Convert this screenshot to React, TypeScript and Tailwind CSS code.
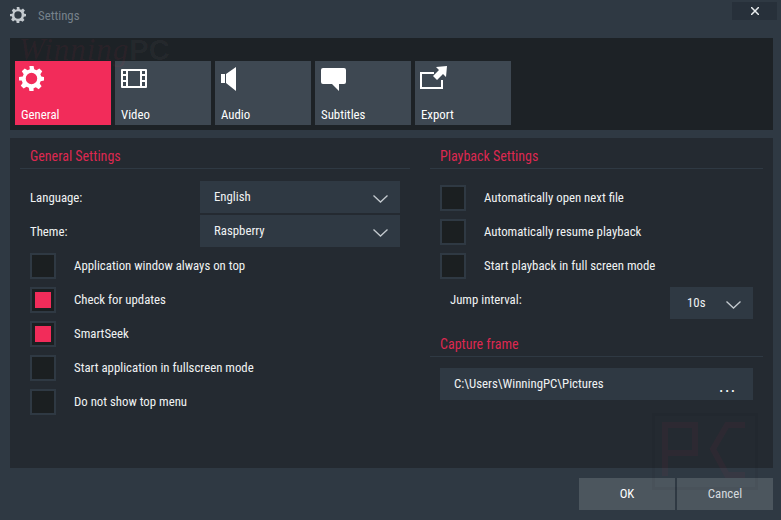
import React from 'react';

const GENERAL_OPTIONS = [
  { label: 'Application window always on top', checked: false },
  { label: 'Check for updates', checked: true },
  { label: 'SmartSeek', checked: true },
  { label: 'Start application in fullscreen mode', checked: false },
  { label: 'Do not show top menu', checked: false },
];

const PLAYBACK_OPTIONS = [
  'Automatically open next file',
  'Automatically resume playback',
  'Start playback in full screen mode',
];

function GearIcon({ className }: { className?: string }) {
  return (
    <svg viewBox="0 0 24 24" className={className} fill="currentColor">
      <path
        fillRule="evenodd"
        d="M10 0h4l.6 3.2 2.2.9L19.500 2.300l2.800 2.800-1.800 2.700.9 2.200L24 10.600v3.400l-3.200.6-.9 2.200 1.800 2.700-2.800 2.800-2.700-1.800-2.200.9L14 24h-4l-.6-3.200-2.200-.9-2.700 1.800-2.800-2.800 1.800-2.700-.9-2.200L0 14v-3.400l3.600-.6.900-2.200-1.800-2.700 2.800-2.800 2.700 1.800 2.200-.9zM12 6.500a5.500 5.500 0 1 0 0 11 5.500 5.500 0 0 0 0-11z"
      />
    </svg>
  );
}

function FilmIcon() {
  return (
    <svg viewBox="0 0 26 19" className="w-[26px] h-[19px] mt-[3px]" fill="currentColor">
      <path
        fillRule="evenodd"
        d="M1 0h24a1 1 0 0 1 1 1v17a1 1 0 0 1-1 1H1a1 1 0 0 1-1-1V1a1 1 0 0 1 1-1zM2 2v3h3V2zm0 5v4h3V7zm0 6v4h3v-4zM7 2v15h12V2zm14 0v3h3V2zm0 5v4h3V7zm0 6v4h3v-4z"
      />
    </svg>
  );
}

function SpeakerIcon() {
  return (
    <svg viewBox="0 0 16 24" className="w-[16px] h-[24px] mt-px" fill="currentColor">
      <path d="M0 7h4v9H0zM5 7l10-7v24L5 16z" />
    </svg>
  );
}

function BubbleIcon() {
  return (
    <svg viewBox="0 0 25 23" className="w-[25px] h-[23px] mt-[2px]" fill="currentColor">
      <path d="M2 0h21a2 2 0 0 1 2 2v12a2 2 0 0 1-2 2h-5v7l-7-7H2a2 2 0 0 1-2-2V2a2 2 0 0 1 2-2z" />
    </svg>
  );
}

function ExportIcon() {
  return (
    <svg viewBox="0 0 27 23" className="w-[27px] h-[23px] -ml-px" fill="none">
      <path d="M14 7H1v15h21v-8" stroke="currentColor" strokeWidth="2" />
      <path d="M27 0l-1 11-3-3-6 6-4-4 6-6-3-3z" fill="currentColor" />
    </svg>
  );
}

const TABS = [
  { label: 'General', icon: <GearIcon className="w-[25px] h-[25px] -ml-[2px]" />, active: true },
  { label: 'Video', icon: <FilmIcon /> },
  { label: 'Audio', icon: <SpeakerIcon /> },
  { label: 'Subtitles', icon: <BubbleIcon /> },
  { label: 'Export', icon: <ExportIcon /> },
];

function Checkbox({ checked }: { checked?: boolean }) {
  return (
    <div className="w-[26px] h-[26px] shrink-0 border-2 border-[#2f3943] bg-[#1b1f21] flex items-center justify-center">
      {checked && <div className="w-4 h-4 bg-[#f22c5a]" />}
    </div>
  );
}

function CheckRow({ label, checked }: { label: string; checked?: boolean }) {
  return (
    <div className="h-[26px] flex items-center">
      <Checkbox checked={checked} />
      <span className="ml-[18px]">{label}</span>
    </div>
  );
}

function Dropdown({ value, className }: { value: string; className?: string }) {
  return (
    <div className={`h-8 bg-[#2f3943] flex items-center justify-between ${className}`}>
      <span className="-mt-px">{value}</span>
      <svg viewBox="0 0 15 8" className="w-[15px] h-2 mt-[3px] text-[#c3c9ce]" fill="none" stroke="currentColor" strokeWidth="1.300">
        <path d="M.5.5l7 6.500 7-6.500" />
      </svg>
    </div>
  );
}

function SectionTitle({ children, className }: { children: React.ReactNode; className?: string }) {
  return (
    <div className={`border-b border-[#2f3943] text-[14px] leading-[16px] text-[#dc2850] ${className}`}>
      {children}
    </div>
  );
}

export default function App() {
  return (
    <div className="relative w-[781px] h-[520px] overflow-hidden bg-[#2f3943] text-[12.800px] text-[#f0f2f3] font-['Roboto',sans-serif] [font-stretch:condensed]">
      <div className="h-[38px] flex items-start">
        <GearIcon className="w-4 h-4 ml-[10px] mt-[7px] text-[#c3c9ce]" />
        <span className="ml-[12px] mt-[6px] text-[#76818b]">Settings</span>
        <div className="ml-auto mr-[4px] mt-[2px] w-[45px] h-[18px] bg-[#27303a] flex items-center justify-center">
          <svg viewBox="0 0 8 8" className="w-2 h-2 text-[#e8ebed]" stroke="currentColor" strokeWidth="1.500">
            <path d="M0 0l8 8M8 0L0 8" />
          </svg>
        </div>
      </div>

      <div className="mx-[10px] w-[763px] h-[92px] bg-[#1d2226] px-[5px] pt-[23px] flex gap-1">
        {TABS.map((tab) => (
          <div
            key={tab.label}
            className={`w-[96px] h-[64px] px-[6px] flex flex-col justify-between pt-[5px] pb-[2px] text-white ${
              tab.active ? 'bg-[#f22c5a]' : 'bg-[#3e4852]'
            }`}
          >
            <div className="h-[26px] flex items-start">{tab.icon}</div>
            <span className="leading-[16px]">{tab.label}</span>
          </div>
        ))}
      </div>

      <div className="mx-[10px] mt-2 w-[763px] h-[330px] bg-[#242a31] flex">
        <div className="w-[400px] pl-[10px] pt-[10px]">
          <SectionTitle className="w-[390px] h-[21px] pl-[10px]">General Settings</SectionTitle>
          <div className="pl-[10px] w-[380px] mt-3">
            <div className="flex items-center h-8">
              <span className="w-[170px] mt-px">Language:</span>
              <Dropdown value="English" className="w-[200px] pl-[14px] pr-3" />
            </div>
            <div className="flex items-center h-8 mt-0.5">
              <span className="w-[170px] mt-px">Theme:</span>
              <Dropdown value="Raspberry" className="w-[200px] pl-[14px] pr-3" />
            </div>
            <div className="flex flex-col gap-2 mt-1.5">
              {GENERAL_OPTIONS.map((opt) => (
                <CheckRow key={opt.label} label={opt.label} checked={opt.checked} />
              ))}
            </div>
          </div>
        </div>

        <div className="w-[363px] pl-5 pt-[10px]">
          <SectionTitle className="w-[333px] h-[21px] pl-[10px]">Playback Settings</SectionTitle>
          <div className="pl-[10px] w-[323px] mt-4">
            <div className="flex flex-col gap-2">
              {PLAYBACK_OPTIONS.map((label) => (
                <CheckRow key={label} label={label} />
              ))}
            </div>
            <div className="flex items-start justify-between mt-2 pl-[10px]">
              <span className="mt-[3px]">Jump interval:</span>
              <Dropdown value="10s" className="w-[83px] pl-[17px] pr-3" />
            </div>
          </div>
          <SectionTitle className="w-[333px] h-[22px] mt-4 pt-px pl-[10px]">Capture frame</SectionTitle>
          <div className="ml-[10px] mt-[11px] w-[313px] h-8 bg-[#2f3943] flex items-center justify-between pl-[14px] pr-[16px]">
            <span>C:\Users\WinningPC\Pictures</span>
            <span className="mt-1.5 text-[14px] font-medium text-white tracking-[2px]">...</span>
          </div>
        </div>
      </div>

      <div className="mt-[10px] mr-2 flex justify-end gap-0.5">
        <div className="w-[96px] h-8 bg-[#4c565e] flex items-center justify-center text-white">OK</div>
        <div className="w-[96px] h-8 bg-[#4c565e] flex items-center justify-center text-[#d5dade]">Cancel</div>
      </div>

      {/* faint watermarks sitting over the window */}
      <div className="absolute left-[19px] top-[27px] flex items-baseline pointer-events-none select-none">
        <span className="text-[31px] italic tracking-[1px] text-[#e0284f]/[0.07] font-['Liberation_Serif',serif]">
          Winning
        </span>
        <span className="text-[29px] font-bold text-white/[0.04] font-['Liberation_Sans',sans-serif]">PC</span>
      </div>
      <div className="absolute left-[652px] top-[413px] w-[106px] h-[77px] border-[3px] border-black/[0.04] pointer-events-none">
        <svg viewBox="0 0 100 71" className="w-full h-full text-[#e0284f]/[0.05]" fill="none" stroke="currentColor" strokeWidth="6">
          <path d="M10 60V9h30v28H10M90 9H72L58 33l14 26h18" />
        </svg>
      </div>
    </div>
  );
}
